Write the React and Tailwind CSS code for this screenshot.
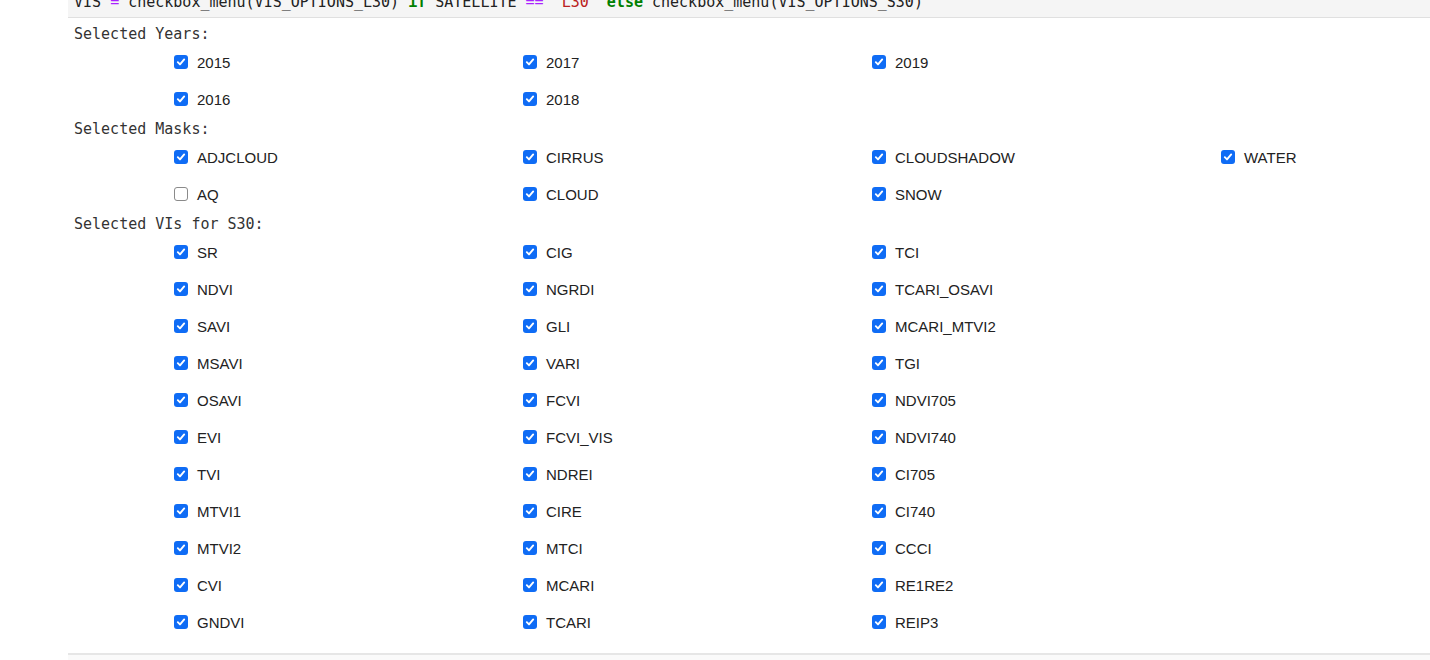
import React from 'react';

// years are laid out column by column in the widget: 2015/2016, 2017/2018, 2019
const YEARS = [['2015', true], ['2017', true], ['2019', true], ['2016', true], ['2018', true]];
const MASKS = [
  ['ADJCLOUD', true], ['CIRRUS', true], ['CLOUDSHADOW', true], ['WATER', true],
  ['AQ', false], ['CLOUD', true], ['SNOW', true],
];
const VIS = [
  'SR', 'CIG', 'TCI',
  'NDVI', 'NGRDI', 'TCARI_OSAVI',
  'SAVI', 'GLI', 'MCARI_MTVI2',
  'MSAVI', 'VARI', 'TGI',
  'OSAVI', 'FCVI', 'NDVI705',
  'EVI', 'FCVI_VIS', 'NDVI740',
  'TVI', 'NDREI', 'CI705',
  'MTVI1', 'CIRE', 'CI740',
  'MTVI2', 'MTCI', 'CCCI',
  'CVI', 'MCARI', 'RE1RE2',
  'GNDVI', 'TCARI', 'REIP3',
].map((n) => [n, true]);

const mono = { fontFamily: '"DejaVu Sans Mono", monospace' };

function Box({ checked }) {
  if (!checked) {
    return <span className="w-[14px] h-[14px] rounded-[3px] border border-[#8a8a8a] bg-white shrink-0 -mt-[3px]" />;
  }
  return (
    <span className="w-[14px] h-[14px] rounded-[3px] bg-[#0f6cf5] shrink-0 -mt-[3px] flex items-center justify-center">
      <svg width="10" height="10" viewBox="0 0 10 10">
        <path d="M1.8 5.2 L4 7.4 L8.2 2.4" fill="none" stroke="white" strokeWidth="1.9" strokeLinecap="round" strokeLinejoin="round" />
      </svg>
    </span>
  );
}

function Group({ title, items, cols }) {
  return (
    <div>
      <div className="h-[21px] leading-[21px] text-[15px] text-[#333]" style={mono}>{title}</div>
      <div className={`pl-[100px] grid ${cols}`}>
        {items.map(([name, checked]) => (
          <div key={name} className="h-[37px] flex items-center gap-[9px]">
            <Box checked={checked} />
            <span className="text-[15px] text-[#222]">{name}</span>
          </div>
        ))}
      </div>
    </div>
  );
}

export default function App() {
  return (
    <div className="w-[1430px] h-[660px] bg-white overflow-hidden" style={{ fontFamily: '"Liberation Sans", Arial, sans-serif' }}>
      <div className="ml-[68px] h-[18px] bg-[#f5f5f5] border-b border-[#e0e0e0] overflow-hidden pl-[6px]">
        <div className="-mt-[8px] leading-[21px] text-[15px] whitespace-nowrap text-[#222]" style={mono}>
          VIS <span className="text-[#aa22ff]">=</span> checkbox_menu(VIS_OPTIONS_L30) <span className="text-[#008000] font-bold">if</span> SATELLITE <span className="text-[#aa22ff]">==</span> <span className="text-[#ba2121]">"L30"</span> <span className="text-[#008000] font-bold">else</span> checkbox_menu(VIS_OPTIONS_S30)
        </div>
      </div>
      <div className="ml-[74px] pt-[6px]">
        <Group title="Selected Years:" items={YEARS} cols="grid-cols-[349px_349px_349px]" />
        <Group title="Selected Masks:" items={MASKS} cols="grid-cols-[349px_349px_349px_349px]" />
        <Group title="Selected VIs for S30:" items={VIS} cols="grid-cols-[349px_349px_349px]" />
      </div>
      <div className="ml-[68px] mt-[11px] h-[20px] border-t-2 border-[#e6e6e6] bg-[#fafafa]" />
    </div>
  );
}
